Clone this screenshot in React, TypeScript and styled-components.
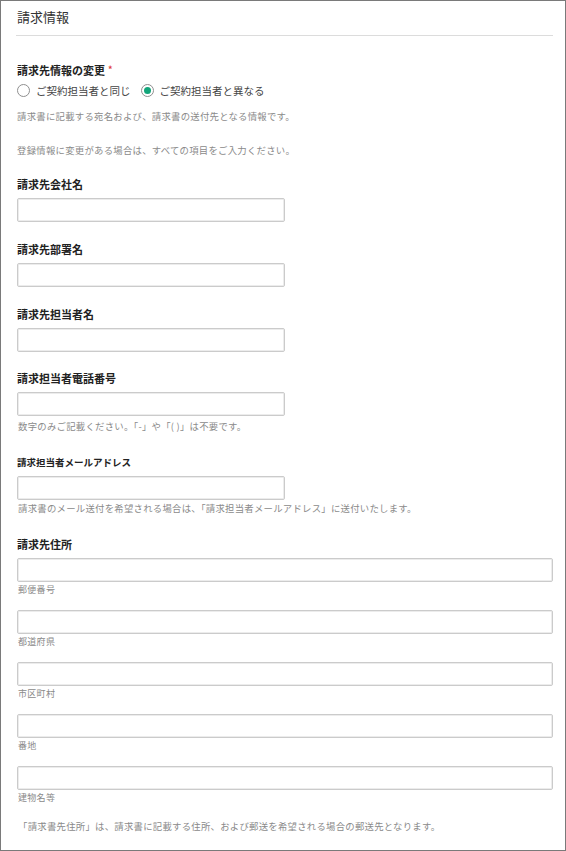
import React from "react";
import styled, { createGlobalStyle } from "styled-components";

const Global = createGlobalStyle`
  html, body { margin: 0; padding: 0; background: #fff; }
  body { font-family: "Noto Sans CJK JP", "Noto Sans", sans-serif; color: #333; }
  * { box-sizing: border-box; }
`;

const Page = styled.div`
  width: 566px;
  height: 851px;
  border: 1px solid #7a7a7a;
  padding: 0 12px 0 15px;
  overflow: hidden;
`;

const Title = styled.h2`
  margin: 0;
  padding-top: 6px;
  font-size: 13px;
  line-height: 20px;
  font-weight: 400;
  color: #333;
  padding-left: 1px;
`;

const Divider = styled.hr`
  margin: 8px 0 0;
  border: 0;
  border-top: 1px solid #dcdcdc;
`;

const Field = styled.div<{ $mt: number }>`
  margin-top: ${(p) => p.$mt}px;
  padding-left: 1px;
`;

const Label = styled.div<{ $small?: boolean; $mb?: number }>`
  font-size: ${(p) => (p.$small ? "9.5px" : "11px")};
  line-height: 16px;
  font-weight: 700;
  color: #222;
  margin-bottom: ${(p) => (p.$mb ?? 6)}px;
`;

const Required = styled.span`
  color: #e04040;
  font-size: 9px;
  margin-left: 3px;
  vertical-align: top;
`;

const RadioRow = styled.div`
  display: flex;
  align-items: center;
  height: 20px;
  margin-top: -2px;
`;

const RadioItem = styled.label`
  display: flex;
  align-items: center;
  font-size: 10.5px;
  color: #444;
  margin-right: 10px;
`;

const RadioCircle = styled.span<{ $checked?: boolean }>`
  width: 13px;
  height: 13px;
  border-radius: 50%;
  border: 1.5px solid #8f8f8f;
  display: inline-flex;
  align-items: center;
  justify-content: center;
  margin-right: 6px;
  &::after {
    content: "";
    width: 7px;
    height: 7px;
    border-radius: 50%;
    background: ${(p) => (p.$checked ? "#13a57a" : "transparent")};
  }
`;

const Help = styled.p<{ $mt: number }>`
  margin: ${(p) => p.$mt}px 0 0;
  font-size: 9.4px;
  line-height: 12px;
  letter-spacing: 0.25px;
  color: #8a8a8a;
  padding-left: 1px;
`;

const Input = styled.input<{ $full?: boolean }>`
  display: block;
  width: ${(p) => (p.$full ? "100%" : "268px")};
  height: 24px;
  border: 1px solid #cbcbcb;
  border-radius: 2px;
  box-shadow: inset 0 0 0 1px #ececec;
  background: #fff;
  outline: none;
  font-size: 11px;
  padding: 0 6px;
`;

const Caption = styled.div`
  margin-top: 2px;
  font-size: 9px;
  line-height: 12px;
  letter-spacing: 0.3px;
  color: #8a8a8a;
  padding-left: 1px;
`;

const AddressItem = styled.div<{ $mt: number }>`
  margin-top: ${(p) => p.$mt}px;
`;

export default function App() {
  const addr = ["郵便番号", "都道府県", "市区町村", "番地", "建物名等"];
  return (
    <>
      <Global />
      <Page>
        <Title>請求情報</Title>
        <Divider />

        <Field $mt={26}>
          <Label $mb={4}>
            請求先情報の変更<Required>*</Required>
          </Label>
          <RadioRow>
            <RadioItem>
              <RadioCircle />
              ご契約担当者と同じ
            </RadioItem>
            <RadioItem>
              <RadioCircle $checked />
              ご契約担当者と異なる
            </RadioItem>
          </RadioRow>
        </Field>
        <Help $mt={10}>請求書に記載する宛名および、請求書の送付先となる情報です。</Help>
        <Help $mt={22}>登録情報に変更がある場合は、すべての項目をご入力ください。</Help>

        <Field $mt={20}>
          <Label>請求先会社名</Label>
          <Input />
        </Field>
        <Field $mt={19}>
          <Label>請求先部署名</Label>
          <Input />
        </Field>
        <Field $mt={19}>
          <Label>請求先担当者名</Label>
          <Input />
        </Field>
        <Field $mt={18}>
          <Label>請求担当者電話番号</Label>
          <Input />
          <Help $mt={4}>数字のみご記載ください。「-」や「( )」は不要です。</Help>
        </Field>
        <Field $mt={22}>
          <Label $small>請求担当者メールアドレス</Label>
          <Input />
          <Help $mt={2}>請求書のメール送付を希望される場合は、「請求担当者メールアドレス」に送付いたします。</Help>
        </Field>
        <Field $mt={22}>
          <Label>請求先住所</Label>
          {addr.map((a, i) => (
            <AddressItem key={a} $mt={i === 0 ? 0 : 14}>
              <Input $full />
              <Caption>{a}</Caption>
            </AddressItem>
          ))}
          <Help $mt={16}>「請求書先住所」は、請求書に記載する住所、および郵送を希望される場合の郵送先となります。</Help>
        </Field>
      </Page>
    </>
  );
}
